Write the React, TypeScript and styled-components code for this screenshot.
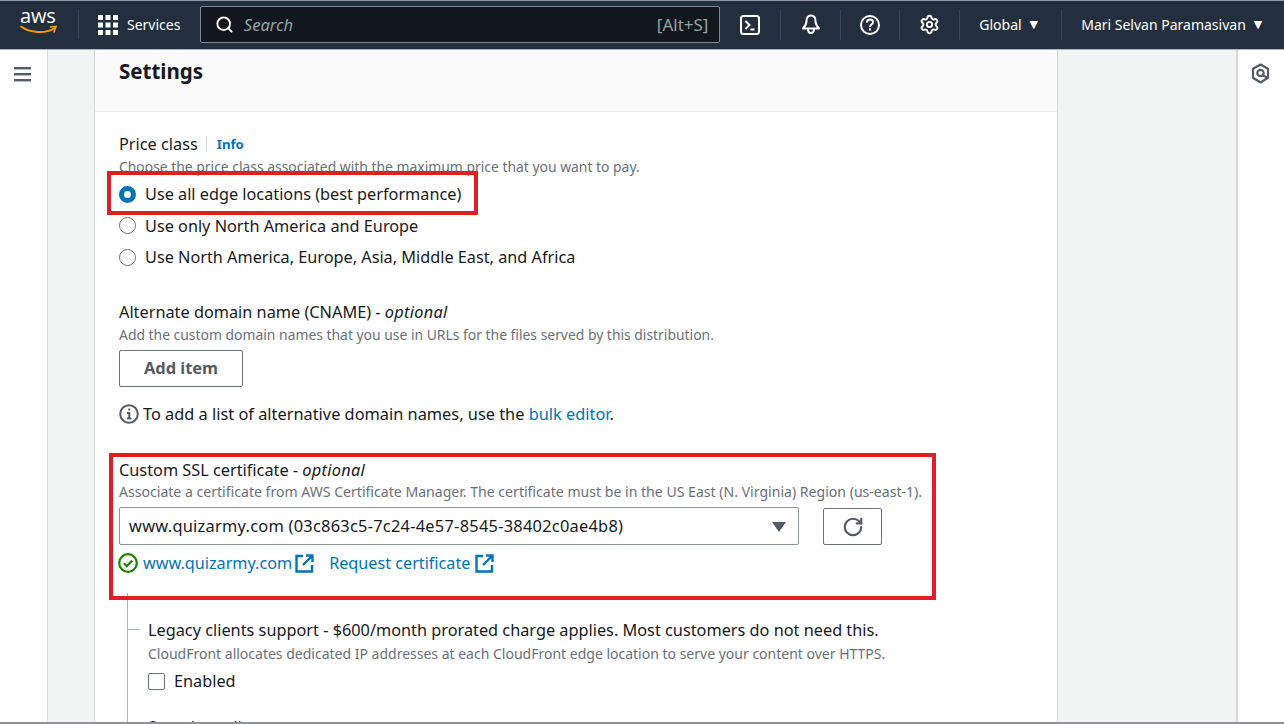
import React from "react";
import styled, { createGlobalStyle } from "styled-components";
import { Search, RotateCw, Settings as Gear } from "lucide-react";

const GlobalStyle = createGlobalStyle`
  html, body { margin: 0; padding: 0; height: 100%; background: #fff; }
  * { box-sizing: border-box; }
  body { font-family: "Noto Sans", "Open Sans", sans-serif; color: #16191f; }
`;

const ExternalIcon = () => (
  <svg width="19" height="19" viewBox="0 0 19 19" fill="none" stroke="#0073bb" strokeWidth="2.4">
    <path d="M8 2H1.500v15.500H17V11" />
    <path d="M11 1.500h6.500V8M17 2L8 11" />
  </svg>
);

export default function App() {
  return (
    <Page>
      <GlobalStyle />
      <Header>
        <Logo>
          <LogoText>aws</LogoText>
          <svg width="38" height="10" viewBox="0 0 38 10" fill="none">
            <path d="M1 1.500C10 8 25 9 34 3.500" stroke="#ff9900" strokeWidth="2" strokeLinecap="round" />
            <path d="M30.500 2L36 1.500L34 7" stroke="#ff9900" strokeWidth="1.600" strokeLinecap="round" />
          </svg>
        </Logo>
        <Services>
          <svg width="20" height="20" viewBox="0 0 20 20" fill="#fff">
            {[0, 7.5, 15].flatMap((y) =>
              [0, 7.5, 15].map((x) => <rect key={`${x}-${y}`} x={x} y={y} width="5" height="5" />)
            )}
          </svg>
          <span>Services</span>
        </Services>
        <SearchBox>
          <Search size={19} color="#fff" strokeWidth={2.4} />
          <SearchHint>Search</SearchHint>
          <Shortcut>[Alt+S]</Shortcut>
        </SearchBox>
        <IconSlot $width={60}>
          <svg width="20" height="20" viewBox="0 0 20 20" fill="none" stroke="#fff" strokeWidth="2">
            <rect x="1" y="1" width="18" height="18" rx="2.500" />
            <path d="M5.500 6l4 4-4 4M10.500 14.500h4" />
          </svg>
        </IconSlot>
        <IconSlot $width={60} $divided>
          <svg width="20" height="21" viewBox="0 0 20 21" fill="none" stroke="#fff" strokeWidth="2">
            <path d="M10 1.500c-3 0-4.500 2.500-4.500 5.500 0 3-1 5-3.500 7.500h16c-2.500-2.500-3.500-4.500-3.500-7.500 0-3-1.500-5.500-4.500-5.500z" strokeLinejoin="round" />
            <path d="M7 15c0 2.500 1.300 4 3 4s3-1.500 3-4" />
          </svg>
        </IconSlot>
        <IconSlot $width={59} $divided>
          <svg width="20" height="20" viewBox="0 0 20 20" fill="none" stroke="#fff" strokeWidth="2">
            <circle cx="10" cy="10" r="9" />
            <path d="M7 7.500c0-1.800 1.300-3 3-3s3 1.200 3 2.800c0 2.200-3 2.400-3 4.700" />
            <path d="M10 13.500v2" />
          </svg>
        </IconSlot>
        <IconSlot $width={60} $divided>
          <Gear size={21} color="#fff" strokeWidth={2.2} />
        </IconSlot>
        <Menu $width={102} $divided>
          Global <Caret>▼</Caret>
        </Menu>
        <Menu $width={223} $divided>
          Mari Selvan Paramasivan <Caret>▼</Caret>
        </Menu>
      </Header>

      <Body>
        <LeftRail>
          <svg width="17" height="15" viewBox="0 0 17 15" fill="#545b64">
            <rect width="17" height="2.400" />
            <rect y="6" width="17" height="2.400" />
            <rect y="12" width="17" height="2.400" />
          </svg>
        </LeftRail>
        <Gutter $width={46} />
        <Card>
          <CardHeader>Settings</CardHeader>
          <CardBody>
            <LabelRow>
              <FieldLabel>Price class</FieldLabel>
              <InfoLink>Info</InfoLink>
            </LabelRow>
            <Description>Choose the price class associated with the maximum price that you want to pay.</Description>
            <RadioGroup>
              <RadioRow>
                <Radio $checked />
                Use all edge locations (best performance)
                <FirstHighlight />
              </RadioRow>
              <RadioRow>
                <Radio />
                Use only North America and Europe
              </RadioRow>
              <RadioRow>
                <Radio />
                Use North America, Europe, Asia, Middle East, and Africa
              </RadioRow>
            </RadioGroup>

            <AltField>
              <FieldLabel>
                Alternate domain name (CNAME) - <em>optional</em>
              </FieldLabel>
              <Description>Add the custom domain names that you use in URLs for the files served by this distribution.</Description>
              <AddButton>Add item</AddButton>
              <InfoLine>
                <svg width="20" height="20" viewBox="0 0 20 20" fill="none" stroke="#545b64" strokeWidth="2">
                  <circle cx="10" cy="10" r="8.800" />
                  <path d="M8 9h2.300v5M8 14.500h4.500M9.200 5.500h2" />
                </svg>
                <span>
                  To add a list of alternative domain names, use the <BlueLink>bulk editor</BlueLink>.
                </span>
              </InfoLine>
            </AltField>

            <SslField>
              <SecondHighlight />
              <FieldLabel>
                Custom SSL certificate - <em>optional</em>
              </FieldLabel>
              <SslDescription>
                Associate a certificate from AWS Certificate Manager. The certificate must be in the US East (N. Virginia) Region (us-east-1).
              </SslDescription>
              <SelectRow>
                <Select>
                  www.quizarmy.com (03c863c5-7c24-4e57-8545-38402c0ae4b8)
                  <SelectCaret />
                </Select>
                <RefreshButton>
                  <RotateCw size={22} color="#545b64" strokeWidth={2.4} />
                </RefreshButton>
              </SelectRow>
              <LinkRow>
                <svg width="20" height="20" viewBox="0 0 20 20" fill="none" stroke="#1d8102" strokeWidth="2.200">
                  <circle cx="10" cy="10" r="8.800" />
                  <path d="M5.800 10.200l3 3 5.400-5.800" />
                </svg>
                <CertLink>www.quizarmy.com</CertLink>
                <ExternalIcon />
                <RequestLink>Request certificate</RequestLink>
                <ExternalIcon />
              </LinkRow>
            </SslField>

            <Nested>
              <NestedField>
                <FieldLabel>Legacy clients support - $600/month prorated charge applies. Most customers do not need this.</FieldLabel>
                <NestedDescription>CloudFront allocates dedicated IP addresses at each CloudFront edge location to serve your content over HTTPS.</NestedDescription>
                <CheckRow>
                  <Checkbox />
                  Enabled
                </CheckRow>
              </NestedField>
              <PolicyLabel>Security policy</PolicyLabel>
            </Nested>
          </CardBody>
        </Card>
        <Gutter $width={178} />
        <RightRail>
          <svg width="19" height="21" viewBox="0 0 19 21" fill="none" stroke="#545b64" strokeWidth="2.200">
            <path d="M9.500 1.500l7.500 4.300v9l-7.500 4.700L2 14.800v-9z" strokeLinejoin="round" />
            <circle cx="9.500" cy="10" r="3.200" />
            <path d="M12 12.500l4 2" />
          </svg>
        </RightRail>
      </Body>
      <BottomEdge />
    </Page>
  );
}

const Page = styled.div`
  width: 1284px;
  height: 724px;
  display: flex;
  flex-direction: column;
  overflow: hidden;
`;

const Header = styled.header`
  flex: 0 0 50px;
  display: flex;
  align-items: center;
  background: #232f3e;
  border-top: 1px solid #8d99a8;
  border-bottom: 1px solid #aab7b8;
  padding: 0 0 1px 20px;
  color: #fff;
`;

const Logo = styled.div`
  width: 59px;
  height: 29px;
  display: flex;
  flex-direction: column;
  border-right: 1px solid #37475a;
  margin-right: 19px;
  line-height: 1;
  svg {
    margin-top: -3px;
  }
`;

const LogoText = styled.span`
  font-family: "Open Sans", sans-serif;
  font-size: 20px;
  height: 22px;
  letter-spacing: -0.2px;
  margin-top: -4px;
`;

const Services = styled.div`
  width: 101px;
  display: flex;
  align-items: center;
  gap: 9px;
  font-size: 14px;
  margin-right: 1px;
`;

const SearchBox = styled.div`
  width: 521px;
  height: 37px;
  display: flex;
  align-items: center;
  padding: 0 11px 0 14px;
  background: #12161d;
  border: 1px solid #7d8998;
  border-radius: 2px;
`;

const SearchHint = styled.span`
  flex: 1;
  margin-left: 10px;
  font-size: 16.500px;
  font-style: italic;
  color: #95a5a6;
`;

const Shortcut = styled.span`
  font-size: 17px;
  color: #95a5a6;
`;

const IconSlot = styled.div<{ $width: number; $divided?: boolean }>`
  width: ${(p) => p.$width}px;
  height: 30px;
  display: flex;
  align-items: center;
  justify-content: center;
  border-left: ${(p) => (p.$divided ? "1px solid #37475a" : "none")};
`;

const Menu = styled(IconSlot)`
  gap: 8px;
  font-size: 14px;
  white-space: nowrap;
  justify-content: flex-start;
  padding-left: 19px;
`;

const Caret = styled.span`
  font-size: 11px;
  font-family: "DejaVu Sans", sans-serif;
`;

const Body = styled.main`
  flex: 1;
  min-height: 0;
  display: flex;
  overflow: hidden;
  background: #f2f3f3;
`;

const LeftRail = styled.nav`
  flex: 0 0 48px;
  background: #fff;
  border-right: 1px solid #d5dbdb;
  padding: 15px 0 0 14px;
`;

const Gutter = styled.div<{ $width: number }>`
  flex: 0 0 ${(p) => p.$width}px;
  background: #f2f3f3;
`;

const RightRail = styled.aside`
  flex: 1;
  background: #fff;
  border-left: 2px solid #d5dbdb;
  padding: 13px 0 0 13px;
`;

const Card = styled.section`
  flex: 0 0 964px;
  background: #fff;
  border-left: 1px solid #d5dbdb;
  border-right: 1px solid #d5dbdb;
`;

const CardHeader = styled.h2`
  margin: 0;
  height: 62px;
  padding: 6px 0 0 24px;
  font-size: 20.500px;
  font-weight: 700;
  line-height: 30px;
  background: #fafafa;
  border-bottom: 1px solid #eaeded;
`;

const CardBody = styled.div`
  padding: 21px 24px 0;
`;

const LabelRow = styled.div`
  display: flex;
  align-items: center;
`;

const FieldLabel = styled.div`
  font-size: 16.300px;
  line-height: 22px;
  color: #16191f;
  white-space: nowrap;
  em {
    letter-spacing: 0.3px;
  }
`;

const InfoLink = styled.a`
  margin-left: 8px;
  padding-left: 10px;
  border-left: 1px solid #d5dbdb;
  font-size: 13.200px;
  font-weight: 700;
  line-height: 16px;
  color: #0073bb;
`;

const Description = styled.div`
  margin-top: 1px;
  font-size: 13.900px;
  line-height: 22px;
  color: #687078;
  white-space: nowrap;
`;

const SslDescription = styled(Description)`
  margin-top: 0;
  font-size: 14.080px;
`;

const NestedDescription = styled(Description)`
  margin-top: 2px;
  font-size: 14px;
`;

const RadioGroup = styled.div`
  display: flex;
  flex-direction: column;
  gap: 7.500px;
  margin-top: 4px;
`;

const RadioRow = styled.label`
  position: relative;
  height: 24px;
  display: flex;
  align-items: center;
  gap: 9px;
  font-size: 16.250px;
  color: #16191f;
`;

const Radio = styled.span<{ $checked?: boolean }>`
  width: 17px;
  height: 17px;
  border-radius: 50%;
  flex: none;
  background: #fff;
  border: ${(p) => (p.$checked ? "5px solid #0073bb" : "1.500px solid #687078")};
`;

const Highlight = styled.div`
  position: absolute;
  border: 4px solid #e11d28;
  pointer-events: none;
`;

const FirstHighlight = styled(Highlight)`
  left: -12px;
  top: -11px;
  width: 371px;
  height: 44px;
`;

const SecondHighlight = styled(Highlight)`
  left: -10px;
  top: -6px;
  width: 827px;
  height: 147px;
`;

const AltField = styled.div`
  margin-top: 32px;
`;

const AddButton = styled.button`
  display: block;
  width: 124px;
  height: 37px;
  margin-top: 4px;
  padding: 0 0 2px;
  background: #fff;
  border: 1px solid #687078;
  border-radius: 2px;
  font-family: inherit;
  font-size: 16.400px;
  font-weight: 700;
  color: #545b64;
`;

const InfoLine = styled.div`
  display: flex;
  align-items: center;
  gap: 4px;
  margin-top: 16px;
  font-size: 16.350px;
  line-height: 22px;
  color: #16191f;
`;

const BlueLink = styled.a`
  color: #0073bb;
`;

const SslField = styled.div`
  position: relative;
  margin-top: 34px;
`;

const SelectRow = styled.div`
  display: flex;
  align-items: flex-start;
  gap: 24px;
  margin-top: 4px;
`;

const Select = styled.div`
  position: relative;
  width: 680px;
  height: 38px;
  display: flex;
  align-items: center;
  padding: 0 0 2px 9px;
  border: 1px solid #8d9596;
  border-radius: 2px;
  font-size: 16.400px;
  letter-spacing: 0.25px;
  color: #16191f;
`;

const SelectCaret = styled.span`
  position: absolute;
  right: 12px;
  top: 14px;
  border-left: 7px solid transparent;
  border-right: 7px solid transparent;
  border-top: 10px solid #545b64;
`;

const RefreshButton = styled.div`
  width: 59px;
  height: 37px;
  margin-top: 1px;
  display: flex;
  align-items: center;
  justify-content: center;
  border: 1px solid #687078;
  border-radius: 2px;
`;

const LinkRow = styled.div`
  display: flex;
  align-items: center;
  height: 24px;
  margin-top: 6px;
  margin-left: -1px;
  font-size: 16.200px;
  color: #0073bb;
`;

const CertLink = styled.a`
  margin: 0 3px 0 5px;
`;

const RequestLink = styled.a`
  margin: 0 5px 0 15px;
`;

const Nested = styled.div`
  margin: 18px 0 0 8px;
  padding: 26px 0 0 20px;
  border-left: 1px solid #aab7b8;
`;

const NestedField = styled.div`
  position: relative;
  &::before {
    content: "";
    position: absolute;
    left: -20px;
    top: 10px;
    width: 12px;
    border-top: 1px solid #aab7b8;
  }
`;

const CheckRow = styled.label`
  display: flex;
  align-items: center;
  gap: 9px;
  height: 24px;
  margin-top: 4px;
  font-size: 16.250px;
  color: #16191f;
`;

const Checkbox = styled.span`
  width: 17px;
  height: 17px;
  border: 1.500px solid #687078;
  border-radius: 2px;
`;

const PolicyLabel = styled(FieldLabel)`
  margin-top: 23px;
`;

const BottomEdge = styled.div`
  flex: 0 0 2px;
  background: #8d9596;
`;
